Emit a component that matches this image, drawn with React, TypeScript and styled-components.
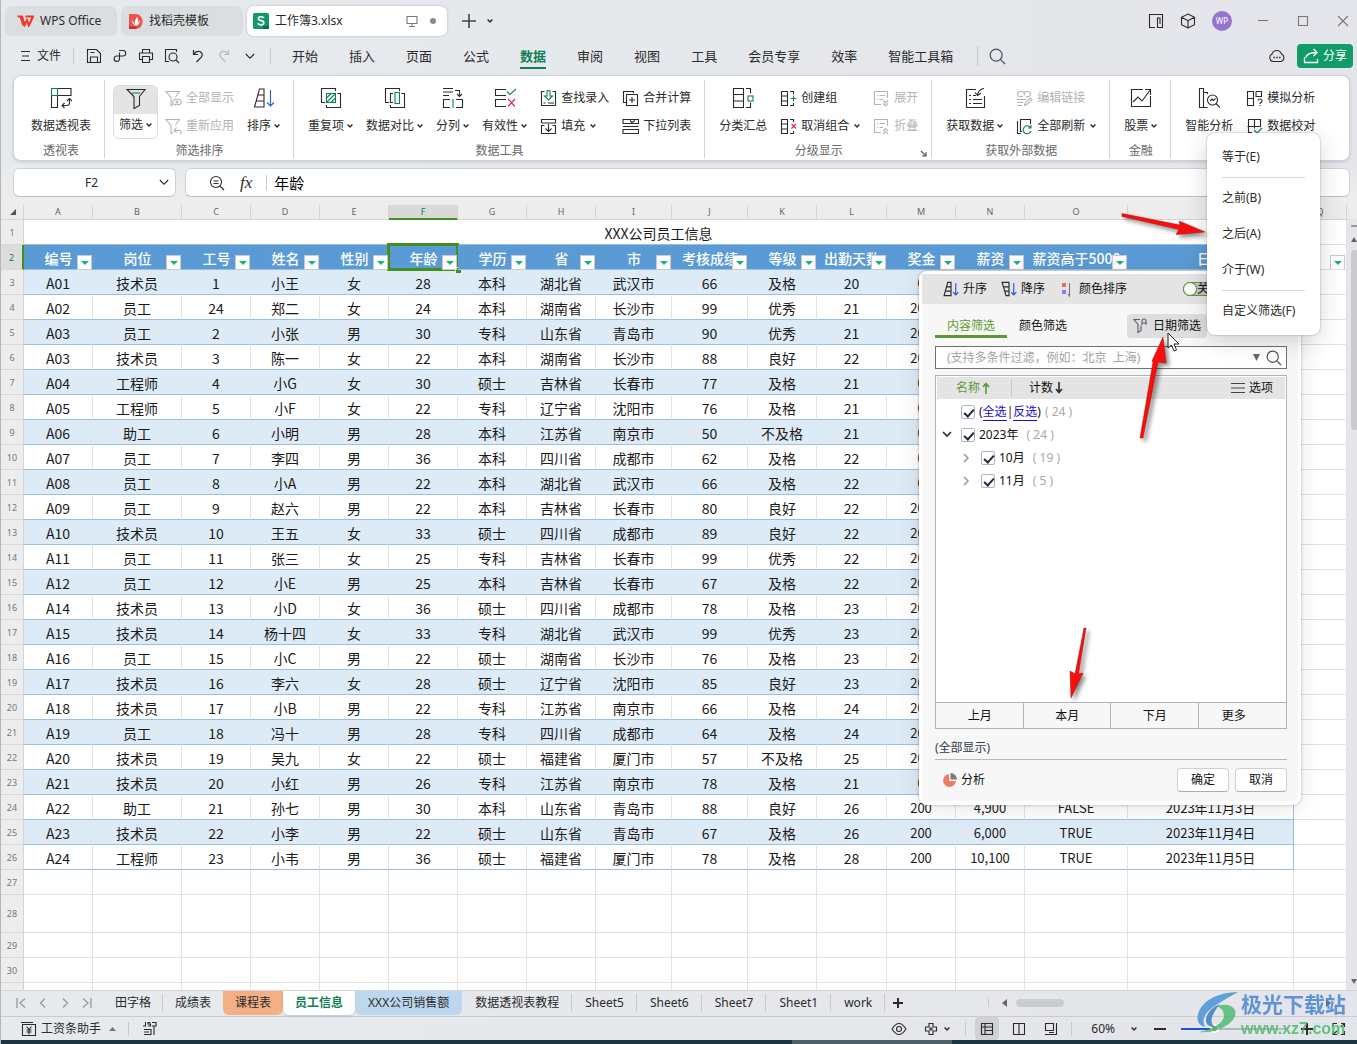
import React from 'react';
import styled, { createGlobalStyle, css } from 'styled-components';

const UI_FONT = '"Noto Sans", "Noto Sans CJK SC", sans-serif';
const CELL_FONT = '"Noto Sans CJK SC", "Noto Sans", sans-serif';
const GREEN = '#0f8056';
const INK = '#2b2b2b';

const Global = createGlobalStyle`
  * { box-sizing: border-box; }
  body { margin: 0; background: #e6e9ed; }
  button, input { font: inherit; color: inherit; margin: 0; padding: 0; border: 0; background: none; }
  button { cursor: pointer; white-space: nowrap; }
  svg { display: block; flex: none; }
`;

/* ---------- data ---------- */

const COLS: [string, number | null][] = [
  ['A', 69], ['B', 89], ['C', 69], ['D', 69], ['E', 69], ['F', 69], ['G', 69], ['H', 69], ['I', 76],
  ['J', 76], ['K', 69], ['L', 70], ['M', 69], ['N', 69], ['O', 103], ['P', 166], ['Q', null],
];
const HEADS = ['编号', '岗位', '工号', '姓名', '性别', '年龄', '学历', '省', '市', '考核成绩', '等级', '出勤天数', '奖金', '薪资', '薪资高于5000', '日期'];
const ROWS = `A01 技术员 1 小王 女 28 本科 湖北省 武汉市 66 及格 20 0
A02 员工 24 郑二 女 24 本科 湖南省 长沙市 99 优秀 21 200
A03 员工 2 小张 男 30 专科 山东省 青岛市 90 优秀 21 200
A03 技术员 3 陈一 女 22 本科 湖南省 长沙市 88 良好 22 200
A04 工程师 4 小G 女 30 硕士 吉林省 长春市 77 及格 21 0
A05 工程师 5 小F 女 22 专科 辽宁省 沈阳市 76 及格 21 0
A06 助工 6 小明 男 28 本科 江苏省 南京市 50 不及格 21 0
A07 员工 7 李四 男 36 本科 四川省 成都市 62 及格 22 0
A08 员工 8 小A 男 22 本科 湖北省 武汉市 66 及格 22 0
A09 员工 9 赵六 男 22 本科 吉林省 长春市 80 良好 22 200
A10 技术员 10 王五 女 33 硕士 四川省 成都市 89 良好 22 200
A11 员工 11 张三 女 25 专科 吉林省 长春市 99 优秀 22 200
A12 员工 12 小E 男 25 本科 吉林省 长春市 67 及格 22 200
A14 技术员 13 小D 女 36 硕士 四川省 成都市 78 及格 23 200
A15 技术员 14 杨十四 女 33 专科 湖北省 武汉市 99 优秀 23 200
A16 员工 15 小C 男 22 硕士 湖南省 长沙市 76 及格 23 200
A17 技术员 16 李六 女 28 硕士 辽宁省 沈阳市 85 良好 23 200
A18 技术员 17 小B 男 22 专科 江苏省 南京市 66 及格 24 200
A19 员工 18 冯十 男 28 专科 四川省 成都市 64 及格 24 200
A20 技术员 19 吴九 女 22 硕士 福建省 厦门市 57 不及格 25 200
A21 技术员 20 小红 男 26 专科 江苏省 南京市 78 及格 21 0
A22 助工 21 孙七 男 30 本科 山东省 青岛市 88 良好 26 200 4,900 FALSE 2023年11月3日
A23 技术员 22 小李 男 22 硕士 山东省 青岛市 67 及格 26 200 6,000 TRUE 2023年11月4日
A24 工程师 23 小韦 男 36 硕士 福建省 厦门市 78 及格 28 200 10,100 TRUE 2023年11月5日`
  .split('\n').map((l) => l.split(' '));

/* ---------- icons ---------- */

type IcoProps = { s?: number; w?: number; h?: number; c?: string; sw?: number; children: React.ReactNode };
const Ico = ({ s = 16, w, h, c = INK, sw = 1.1, children }: IcoProps) => (
  <svg width={w ?? s} height={h ?? s} viewBox={`0 0 ${w ?? s} ${h ?? s}`} fill="none" stroke={c} strokeWidth={sw} aria-hidden="true">
    {children}
  </svg>
);
const Chev = ({ c = INK }: { c?: string }) => (
  <Ico w={6} h={6} c={c} sw={1.4}><path d="M.6 1.500 3 4 5.400 1.500" /></Ico>
);
const BigChev = () => <Ico w={10} h={7} sw={1.1}><path d="M.8 1 5 5.200 9.200 1" /></Ico>;

const PivotIcon = () => (
  <Ico s={22}>
    <path d="M7.500 1.500h13.500v7H7.500M1.500 11v9.500h6V8.500M12 18.500h5q2.500 0 2.500-2.500v-4M14.500 16l-2.500 2.500 2.500 2.500M17 14l2.500-2.500L22 14M1.500 8.500V12" />
    <rect x="1.5" y="1.5" width="6" height="7" stroke={GREEN} />
  </Ico>
);
const FunnelIcon = () => (
  <Ico s={22}>
    <path d="M2 1.500h18l-5.500 7v9L9 20.500v-12L2 1.500z" /><path d="M7 5h8" stroke={GREEN} />
  </Ico>
);
const SmallFunnel = ({ eye }: { eye?: boolean }) => (
  <Ico s={17} c="#b3b3b3">
    <path d="M8 14.500 6 15.500V7.500L1 1.500h13.500L10.500 7" />
    {eye ? <><ellipse cx="12" cy="12" rx="4.300" ry="2.800" /><circle cx="12" cy="12" r="1" /></> : <path d="M9 12.500h4a2 2 0 0 1 2 3.500M11.500 9.500l-2.500 3 2.500 2" />}
  </Ico>
);
const SortIcon = ({ s = 22, flip = false }: { s?: number; flip?: boolean }) => (
  <svg width={s} height={s} viewBox="0 0 22 22" fill="none" stroke={INK} strokeWidth={s < 20 ? 1.6 : 1.1} aria-hidden="true">
    {flip ? <path d="M1.500 2h9.500v18H7zM3 8h8M5 14h6" /> : <path d="M6.500 2H11v18H1.500zM5 8h6M3 14h8" />}
    <path d="M17.500 3v16M14 15.500l3.500 3.500 3.500-3.500" stroke="#2a5be0" />
  </svg>
);
const DupIcon = () => (
  <Ico s={22}>
    <path d="M5 15.500H1.500v-14h14V4M17.500 6.500h3v14h-14V18" />
    <rect x="6.500" y="6.500" width="9" height="9" stroke={GREEN} />
    <path d="M6.500 11 11 6.500M6.500 15.500l9-9M11 15.500l4.500-4.500" stroke={GREEN} />
  </Ico>
);
const CompareIcon = () => (
  <Ico s={22}>
    <path d="M5 15.500H1.500v-14h14V4M17.500 6.500h3v14h-14V18" />
    <path d="M9 6.500H6.500v9H9" /><rect x="11" y="5.500" width="4.500" height="11" stroke={GREEN} />
  </Ico>
);
const SplitIcon = () => (
  <Ico s={22}>
    <path d="M1 1.500h10M1 5h10M1 8.500h6M13 3.500h4.500V9M15 7l2.500 2.500L20 7M8 12.500H1.500v8H8M14 12.500h6.500v8H14" />
    <path d="M11 12v9" stroke={GREEN} />
  </Ico>
);
const ValidIcon = () => (
  <Ico s={22}>
    <path d="M12 2.500H1.500v6H12M12 12.500H1.500v7H12" />
    <path d="M13 4.500l3 3 6-5.500" stroke={GREEN} /><path d="M14 12l7 7.500M21 12l-7 7.500" stroke="#d4264f" />
  </Ico>
);
const LookupIcon = () => (
  <Ico s={17}>
    <path d="M4.500 1.500h-3v14h14v-14h-3M3.500 13h2M8 13h6" />
    <path d="M7 .8h3v5.200h2.500L8.500 10 4.500 6H7z" stroke={GREEN} />
  </Ico>
);
const FillIcon = () => (
  <Ico s={17}><path d="M1.500 5V1.500h14V5H1.500M4.500 7.500h-3v8h14v-8h-3M8.500 6v7M5.500 10.500l3 3 3-3" /></Ico>
);
const MergeIcon = () => (
  <Ico s={17}><path d="M4 12.500H1.500v-11h10V3M4.500 4.500h11v11h-11zM10 7v6M7 10h6" /></Ico>
);
const DropIcon = () => (
  <Ico s={17}><path d="M1 1.500h15.500v4H1zM8 2.500l2 2 3-2M1 8.500h15.500M1 11.500h15.500v4H1z" /></Ico>
);
const SubtotalIcon = () => (
  <Ico s={22}>
    <path d="M1.500 1.500h10v19h-10zM1.500 7.500h10M1.500 14h10M14 1.500h4.500v5M14 20.500h4.500v-5" />
    <rect x="16" y="9" width="5" height="5" stroke={GREEN} />
  </Ico>
);
const GroupIcon = ({ cut }: { cut?: boolean }) => (
  <Ico s={17}>
    <path d="M1.500 1.500h6v14h-6zM1.500 6h6M1.500 11h6M10 1.500h3.500V4M10 15.500h3.500V13" />
    {cut ? <path d="M11.500 6l4.500 4.500M16 6l-4.500 4.500" stroke="#d4264f" /> : <path d="M13.500 5.500v6M10.500 8.500h6" stroke={GREEN} />}
  </Ico>
);
const ExpandIcon = ({ up }: { up?: boolean }) => (
  <Ico s={17} c="#b3b3b3">
    <path d="M8 14.500H1.500v-13h13V8M4 5.500h1M6.500 5.500H12M4 9.500h1M6.500 9.500H10" />
    <path d={up ? 'M10 13l2.500-2.500L15 13M10 16l2.500-2.500L15 16' : 'M10 10.500l2.500 2.500 2.500-2.500M10 13.500l2.500 2.500 2.500-2.500'} />
  </Ico>
);
const GetDataIcon = () => (
  <Ico s={22}>
    <path d="M12 2.500H2.500v18h18V9M5 8.500h2M9 8.500h3M5 12.500h2M9 12.500h9M5 16.500h2M9 16.500h9M20 1.500q-6 1-6.500 7M11 5.500l2.500 3L17 6" />
  </Ico>
);
const LinkEditIcon = () => (
  <Ico s={17} c="#b3b3b3">
    <path d="M7 6.500H4a2.500 2.500 0 0 1 0-5h2.500a2.500 2.500 0 0 1 1.500 4M8 4a2.500 2.500 0 0 1 2.500-2.500H12a2.500 2.500 0 0 1 0 5h-2M1 9.500h9M1 12.500h6M1 15.500h5M8.500 15.500l1-3 5-4.500 1.500 2-5 4.500z" />
  </Ico>
);
const RefreshAllIcon = () => (
  <Ico s={17}>
    <path d="M1.500 3v12.500H5M6 13.500H4.500v-12h10V6" />
    <path d="M14.500 9.500a4 4 0 1 0 .5 3.500M15 7v3h-3" stroke={GREEN} />
  </Ico>
);
const StockIcon = () => (
  <Ico s={22}><path d="M13 2.500H1.500v17h19V9M3 15l5-5 4 4L20.500 2.500M15 2.500h5.500V8" /></Ico>
);
const SmartIcon = () => (
  <Ico s={22}>
    <path d="M5.500 20.500h-4v-19h4zM5.500 5.500h4V7M5.500 20.500h4" /><circle cx="14.500" cy="13" r="5" /><path d="M18 16.500l4 4M12 14l2-2 1.500 1.500 2-2" />
  </Ico>
);
const SimIcon = () => (
  <Ico s={17}>
    <path d="M1.500 1.500h6v7h-6zM10 1.500h5.500v5H10v-5M1.500 8.500v7h6v-7M12 10.500q.5-1.500 2-1.500t2 1.500-2 2.500v1M14 15v1" />
  </Ico>
);
const ProofIcon = () => (
  <Ico s={17}><path d="M6 14.500H2.500v-13h12v7h-13M8.500 1.500v9" /><path d="M8 12l3 3 5-5" stroke={GREEN} /></Ico>
);
const SearchIcon = ({ s = 17 }: { s?: number }) => (
  <Ico s={s} c="#4a4f5a" sw={1.2}><circle cx={s * 0.42} cy={s * 0.42} r={s * 0.35} /><path d={`M${s * 0.68} ${s * 0.68} ${s - 1} ${s - 1}`} /></Ico>
);

/* ---------- frame ---------- */

const Window = styled.div`
  position: relative; display: flex; flex-direction: column; height: 100vh; overflow: hidden;
  border-left: 1px solid #b4b6b9; background: linear-gradient(90deg, #e6eaed, #e4e5ea);
  font: 12px/20px ${UI_FONT}; color: ${INK};
`;
const Row = styled.div<{ $gap?: number }>`display: flex; align-items: center; gap: ${(p) => p.$gap ?? 0}px;`;
const Spacer = styled.div`flex: 1;`;
const VLine = styled.span<{ $h: number; $l?: number; $r?: number }>`
  width: 1px; height: ${(p) => p.$h}px; margin: 0 ${(p) => p.$r ?? 0}px 0 ${(p) => p.$l ?? 0}px; background: #c6c8cb; flex: none;
`;
const IconBtn = styled.button<{ $w?: number; $gap?: number }>`
  display: flex; align-items: center; justify-content: center; gap: ${(p) => p.$gap ?? 0}px; width: ${(p) => p.$w ?? 26}px; height: 24px; flex: none;
`;

const TitleBar = styled.header`display: flex; align-items: center; height: 40px; padding: 2px 3px 0 4px;`;
const DocTab = styled.button<{ $w: number; $pad?: number; $active?: boolean }>`
  display: flex; align-items: center; gap: 6px; width: ${(p) => p.$w}px; height: 30px; padding: 0 6px 0 ${(p) => p.$pad ?? 6}px;
  margin-right: 4px; border-radius: 7px; background: #dbdee0; text-align: left;
  ${(p) => p.$active && css`background: #fff; margin-right: 8px; box-shadow: 0 0 3px rgba(0, 0, 0, 0.2);`}
`;
const Dot = styled.span`width: 6px; height: 6px; border-radius: 3px; background: #8b8b8b; margin: 0 5px 0 6px;`;
const Avatar = styled.button`
  width: 20px; height: 20px; margin: 0 20px 0 8px; border-radius: 10px; background: #9673cf; color: #fff; font-size: 8px; line-height: 20px;
`;

const MenuBar = styled.nav`display: flex; align-items: center; height: 32px; padding: 0 4px 0 20px;`;
const MenuTabs = styled.div`display: flex; gap: 31px; margin-right: 24px;`;
const MenuTab = styled.button<{ $on?: boolean }>`
  height: 26px; font-size: 13px; line-height: 26px;
  ${(p) => p.$on && css`color: ${GREEN}; font-weight: 700; box-shadow: inset 0 -2px ${GREEN};`}
`;
const ShareBtn = styled.button`
  display: flex; align-items: center; gap: 4px; height: 24px; padding: 0 6px; border-radius: 4px; background: #109b69; color: #fff;
`;

/* ---------- ribbon ---------- */

const Ribbon = styled.section`
  display: flex; margin: 3px 7px 0 12px; padding: 4px 0 2px; border-radius: 8px; background: #fff;
  border: 1px solid #d0d3d6; box-shadow: 0 1px 3px rgba(0, 0, 0, 0.15); flex: none; height: 86px;
`;
const Group = styled.div<{ $first?: boolean; $last?: boolean }>`
  position: relative; display: flex; flex-direction: column; flex: none;
  padding: 4px 13px 0 ${(p) => (p.$first ? 17 : 14)}px; border-right: ${(p) => (p.$last ? 0 : 1)}px solid #d2d3d5;
`;
const Big = styled.button<{ $boxed?: boolean }>`
  display: grid; grid-template-rows: 28px 28px; justify-items: center; align-items: center;
  ${(p) => p.$boxed && css`
    height: 52px; grid-template-rows: 26px 26px; margin: 0 -5px; padding: 0 5px; border-radius: 5px; box-shadow: 0 0 0 1px #dcdcdc;
    background: linear-gradient(#e4e4e4 28px, #fff 28px);
  `}
`;
const Stack = styled.div`display: grid; grid-template-rows: 28px 28px; align-items: center; justify-items: start;`;
const Small = styled.button<{ $off?: boolean }>`
  display: flex; align-items: center; gap: 4px; height: 24px; ${(p) => p.$off && css`color: #b3b3b3;`}
`;
const Label = styled.span<{ $gap?: number }>`display: flex; align-items: center; gap: ${(p) => p.$gap ?? 3}px;`;
const GroupName = styled.div`margin-top: 3px; height: 16px; line-height: 16px; text-align: center; color: #6a6a6a;`;
const Launcher = styled.button`position: absolute; right: 3px; bottom: 1px; width: 8px; height: 8px;`;

const BigItem = ({ icon, text, more, boxed }: { icon: React.ReactNode; text: string; more?: boolean; boxed?: boolean }) => (
  <Big $boxed={boxed}>{icon}<Label>{text}{more && <Chev />}</Label></Big>
);
const SmallItem = ({ icon, text, more, off }: { icon: React.ReactNode; text: string; more?: boolean; off?: boolean }) => (
  <Small $off={off}>{icon}<Label $gap={5}>{text}{more && <Chev />}</Label></Small>
);

/* ---------- formula bar ---------- */

const FormulaBar = styled.div`
  display: flex; gap: 9px; padding: 7px 7px 8px 12px; background: linear-gradient(transparent, #ededed 38px); flex: none;
`;
const Box = styled.div<{ $w?: number }>`
  display: flex; align-items: center; height: 29px; border: 1px solid #cfd1d3; border-bottom-color: #bdbfc1; border-radius: 6px; background: #fff;
  ${(p) => (p.$w ? css`width: ${p.$w}px; padding-right: 6px;` : css`flex: 1; padding-left: 22px;`)}
`;
const NameInput = styled.input`flex: 1; min-width: 0; padding-left: 10px; text-align: center; outline: 0;`;
const FxInput = styled.input`flex: 1; min-width: 0; height: 25px; margin-left: 7px; font-size: 15px; color: #000; outline: 0;`;
const Fx = styled.em`font: italic 17px/20px "Liberation Serif", serif; margin: 0 14px;`;

/* ---------- sheet ---------- */

const SheetArea = styled.main`display: flex; flex: 1; min-height: 0; background: #ededed;`;
const SheetView = styled.div`flex: 1; min-width: 0; overflow: hidden;`;
const Grid = styled.table`
  width: 100%; table-layout: fixed; border-collapse: separate; border-spacing: 0; font: 14px/22px ${CELL_FONT}; color: #1a1a1a;
`;
const ColHead = styled.th<{ $on?: boolean }>`
  height: 15px; padding: 0; font: 9px/12px ${UI_FONT}; color: #666; border-right: 1px solid #d4d4d4; border-bottom: 1px solid #d4d4d4;
  ${(p) => p.$on && css`background: #d9d9d9; color: ${GREEN}; box-shadow: inset 0 -1px #43901f; border-bottom-color: #43901f;`}
`;
const RowHead = styled.th<{ $on?: boolean }>`
  padding: 1px 0 0; font: 9px/12px ${UI_FONT}; color: #777; background: #ededed; border-right: 1px solid #d4d4d4; border-bottom: 1px solid #d9d9d9;
  ${(p) => p.$on && css`background: #dcdcdc; color: ${GREEN}; border-right: 2px solid #43901f;`}
`;
const Tr = styled.tr<{ $h?: number }>`height: ${(p) => p.$h ?? 25}px;`;
const Td = styled.td<{ $kind?: 'band' | 'data' | 'title'; $small?: boolean; $edge?: boolean }>`
  padding: 2px 0 0; text-align: center; white-space: nowrap; overflow: hidden; background: #fff; line-height: 22px;
  border-right: 1px solid #e2e2e2; border-bottom: 1px solid #e2e2e2;
  ${(p) => p.$small && css`font-size: 13px;`}
  ${(p) => p.$kind && css`border-bottom-color: #9bbfe3;`}
  ${(p) => p.$kind === 'band' && css`background: #ddebf7; border-right-color: #ddebf7;`}
  ${(p) => p.$edge && css`border-right-color: #9bbfe3;`}
`;
const FieldHead = styled.th`
  position: relative; padding: 2px 0 0; font-weight: 500; line-height: 22px; color: #fff; white-space: nowrap; background: #5b9bd5; border-bottom: 1px solid #9bbfe3;
`;
const FilterBtn = styled.button`
  position: absolute; right: 1px; bottom: -1px; z-index: 1; display: flex; align-items: center; justify-content: center;
  width: 15px; height: 15px; background: #fff; border: 1px solid #c5cad3;
`;
const Blank = styled(Td)`position: relative;`;
const Selection = styled.span`
  position: absolute; inset: -2px -1px -2px -2px; border: 3px solid #43901f; pointer-events: none;
  &::after { content: ''; position: absolute; right: -5px; bottom: -5px; width: 5px; height: 5px; background: #43901f; border: 1px solid #fff; border-width: 1px 0 0 1px; }
`;
const Corner = styled.span`display: flex; justify-content: flex-end; padding-right: 7px;`;
const VScroll = styled.div`
  display: flex; flex-direction: column; align-items: flex-end; width: 10px; margin-top: 14px; padding: 6px 0 6px; background: #e4e6ea;
`;
const VGap = styled.div`height: 10px;`;
const VThumb = styled.div`width: 6px; height: 180px; margin: 8px 0 auto; border-radius: 4px 0 0 4px; background: #c9cbcf;`;

const Tri = ({ d, w = 8, h = 5, c = '#666' }: { d: string; w?: number; h?: number; c?: string }) => (
  <svg width={w} height={h} viewBox={`0 0 ${w} ${h}`} fill={c} aria-hidden="true"><path d={d} /></svg>
);
const Filter = ({ name }: { name: string }) => (
  <FilterBtn aria-label={`筛选 ${name}`}><Tri d="M0 0h8L4 4z" w={8} h={4} c="#1fae7b" /></FilterBtn>
);

/* ---------- bottom bars ---------- */

const SheetTabs = styled.nav`
  display: flex; align-items: flex-start; height: 27px; border-top: 1px solid #d3d4d6; border-bottom: 1px solid #c9cbcd; flex: none; padding-left: 10px;
`;
const SheetTab = styled.button<{ $bg?: string; $on?: boolean; $line?: boolean; $wide?: boolean }>`
  height: 24px; padding: 0 ${(p) => (p.$wide ? 13 : 12)}px; line-height: 24px; border-radius: 0 0 6px 6px; background: ${(p) => p.$bg ?? 'transparent'};
  ${(p) => p.$on && css`background: #fff; color: ${GREEN}; font-weight: 700; box-shadow: 0 1px 2px rgba(0, 0, 0, 0.15);`}
  ${(p) => p.$line && css`background: linear-gradient(#c6c8cb, #c6c8cb) right 3px / 1px 18px no-repeat;`}
`;
const TabNav = styled.div`display: flex; width: 92px; height: 24px; gap: 2px;`;
const HThumb = styled.div`width: 48px; height: 8px; border-radius: 4px; background: #cbccd0; margin: 0 262px 0 9px;`;
const HScroll = styled.div`display: flex; align-items: center; height: 24px; margin-left: auto; padding-right: 26px;`;
const StatusBar = styled.footer`display: flex; align-items: center; height: 23px; padding-left: 20px; flex: none;`;
const ViewBtn = styled.button<{ $on?: boolean }>`
  display: flex; align-items: center; justify-content: center; width: 24px; height: 23px; margin-right: 8px; border-radius: 4px;
  ${(p) => p.$on && css`background: #d0d1d4;`}
`;
const Zoom = styled.input`
  appearance: none; width: 105px; height: 12px; margin: 0 7px 0 13px; background: linear-gradient(90deg, #2450dc 30%, #b5b7bb 30%) center / 100% 2px no-repeat;
  &::-webkit-slider-thumb { appearance: none; width: 9px; height: 9px; border-radius: 5px; background: #8f8f8f; border: 2px solid #fff; }
`;
const Taskbar = styled.div`display: flex; justify-content: center; height: 4px; background: #1d3540; flex: none; padding-left: 386px;`;
const TaskItem = styled.span`width: 160px; background: #4f6068;`;

/* ---------- filter panel ---------- */

const Panel = styled.section`
  position: absolute; top: 271px; right: 56px; z-index: 5; width: 382px; border: 3px solid #fff; border-bottom-width: 4px; border-radius: 8px;
  background: #f7f7f7; box-shadow: 0 0 3px rgba(0, 0, 0, 0.3), 0 4px 24px rgba(0, 0, 0, 0.1); color: #111;
`;
const PanelTop = styled.div`display: flex; align-items: center; height: 30px; padding-left: 21px; background: #e4e4e4;`;
const TopBtn = styled.button`display: flex; align-items: center; gap: 4px; margin-right: 14px; height: 24px;`;
const Switch = styled.label`
  display: flex; align-items: center; gap: 1px; width: 36px; height: 14px; margin-left: 42px; border: 1px solid #5b9a32; border-radius: 7px; background: #c2c2c2; line-height: 12px;
  input { appearance: none; width: 12px; height: 12px; border-radius: 6px; background: #fff; box-shadow: 0 0 0 1px #5b9a32; }
`;
const PanelBody = styled.div`padding: 9px 11px 9px 13px;`;
const PTab = styled.button<{ $on?: boolean }>`
  height: 25px; padding: 0 12px; line-height: 24px; ${(p) => p.$on && css`color: #5b9a32; box-shadow: inset 0 -3px #5b9a32;`}
`;
const DateBtn = styled.button`
  display: flex; align-items: center; gap: 6px; height: 24px; padding: 0 6px; margin-left: 48px; border-radius: 4px; background: #dedede;
`;
const SearchBox = styled.div`
  display: flex; align-items: center; gap: 6px; height: 23px; margin-top: 8px; padding: 0 4px 0 11px; border: 1px solid #707070; background: #fff;
  input { flex: 1; min-width: 0; outline: 0; }
  input::placeholder { color: #a3a3a3; }
`;
const List = styled.div`margin-top: 6px; border: 1px solid #aab4c3; background: #fff;`;
const ListHead = styled.div`
  display: flex; align-items: center; height: 22px; margin: 1px 1px 0; padding: 0 12px 0 19px; background: #e4e4e4;
`;
const HeadBtn = styled.button<{ $on?: boolean }>`display: flex; align-items: center; gap: 2px; height: 20px; ${(p) => p.$on && css`color: #5b9a32;`}`;
const Tree = styled.div`height: 303px; padding-top: 1px;`;
const TreeRow = styled.div<{ $in: number }>`
  display: flex; align-items: center; gap: 4px; height: 23px; padding-left: ${(p) => p.$in}px;
  label { display: flex; align-items: center; }
  a { color: #1a10c8; text-decoration: none; box-shadow: 0 1px #1a10c8; }
`;
const Twist = styled.button`display: flex; align-items: center; justify-content: center; width: 11px; height: 16px; margin-right: 5px;`;
const Tick = styled.input`
  appearance: none; position: relative; width: 14px; height: 14px; background: #fff; border: 1px solid #aab4c3; border-radius: 2px; flex: none;
  &:checked::after { content: ''; position: absolute; left: 4px; top: 1px; width: 4px; height: 8px; border: solid #23283a; border-width: 0 2px 2px 0; transform: rotate(42deg); }
`;
const Count = styled.span`color: #a8a8a8; margin-left: 1px; white-space: pre;`;
const Months = styled.div`display: grid; grid-template-columns: repeat(4, 1fr); border-top: 1px solid #aab4c3; background: #f7f7f7;`;
const MonthBtn = styled.button<{ $more?: boolean }>`
  height: 25px; line-height: 25px; padding-right: ${(p) => (p.$more ? 17 : 0)}px; & + & { box-shadow: -1px 0 #aab4c3; }
`;
const Shown = styled.div`margin-top: 9px; height: 22px; line-height: 20px; color: #333b4a; border-bottom: 1px solid #b0b9c7;`;
const PanelFoot = styled.div`display: flex; align-items: center; gap: 6px; padding: 8px 0 0 7px;`;
const Btn = styled.button`width: 52px; height: 24px; border: 1px solid #cfcfcf; border-bottom-color: #ababab; border-radius: 4px; background: #fff;`;

const Menu = styled.div`
  position: absolute; top: 133px; right: 37px; z-index: 6; width: 113px; padding: 6px 15px; border-radius: 8px; background: #fff;
  box-shadow: 0 0 2px rgba(0, 0, 0, 0.35), 0 6px 24px rgba(0, 0, 0, 0.16);
`;
const MenuItem = styled.button`display: block; width: 100%; height: 36px; line-height: 36px; text-align: left;`;
const MenuSep = styled.hr`height: 1px; margin: 2px 0; border: 0; background: #d8d8d8;`;

/* ---------- annotations over the window ---------- */

const Mark = styled.svg<{ $x: number; $y: number }>`
  position: absolute; right: ${(p) => p.$x}px; top: ${(p) => p.$y}px; z-index: 8; pointer-events: none; overflow: visible;
`;
const Arrow = styled(Mark)`filter: drop-shadow(3px 3px 2px rgba(0, 0, 0, 0.45)); fill: #fb0d0d; stroke: #a01010; stroke-width: 0.5;`;
const Watermark = styled.div`
  position: absolute; right: 11px; bottom: 5px; z-index: 9; display: flex; align-items: center; gap: 1px; opacity: 0.8; pointer-events: none;
`;
const WmText = styled.div`
  font: 700 21px/32px ${CELL_FONT}; color: #3f7fd0;
  span { display: block; font: 700 16px/20px "Liberation Sans", sans-serif; color: #45b865; }
`;

export default function App() {
  return (
    <Window>
      <Global />
      <TitleBar>
        <DocTab $w={112} $pad={12}>
          <svg width="17" height="12" viewBox="0 0 17 12" fill="none" stroke="#ee3a26" strokeWidth="2.200"><path d="M.5 1.500h4.500L7.500 10l3-6M3.500 1.500 6.500 10.500M8.500 1.500h7.500L11.800 10.500 9.500 4" /></svg>
          WPS Office
        </DocTab>
        <DocTab $w={122} $pad={7}>
          <svg width="15" height="17" viewBox="0 0 15 17"><path d="M1 1h7q6.500 1 6.500 7.500T8 16H1z" fill="#ef5350" /><path d="M1 13.500h8l-1 2.500H1z" fill="#c62f2f" /><path d="M8 13Q5 10 9 4q3 4-1 9M4 7q0 4 4 6M12 7q0 4-4 6" fill="#fff" /></svg>
          找稻壳模板
        </DocTab>
        <DocTab $w={200} $active>
          <svg width="16" height="16" viewBox="0 0 16 16"><rect width="16" height="16" rx="1.500" fill="#12996a" /><path d="M10 13h6v3h-6z" fill="#0b6e4a" /><path d="M10.800 5.200Q10.500 3.700 8 3.700T5.300 5.600Q5.300 7.200 8 7.600T10.800 9.800Q10.600 11.900 8 11.900T5.100 10.100" fill="none" stroke="#fff" strokeWidth="1.600" /></svg>
          工作簿3.xlsx
          <Spacer as="span" />
          <Ico w={12} h={12} c="#7a7a7a"><path d="M1 1.500h10v7H1zM6 8.500v3M3 11.500h6" /></Ico>
          <Dot />
        </DocTab>
        <IconBtn $w={28} aria-label="新建"><Ico s={14} sw={1.600} c="#444"><path d="M7 0v14M0 7h14" /></Ico></IconBtn>
        <IconBtn $w={14} aria-label="标签列表"><Chev /></IconBtn>
        <Spacer />
        <IconBtn $w={32} aria-label="侧边栏"><Ico s={16}><path d="M7 14.500H1.500v-13h13v13H9.500V5H12v6" /></Ico></IconBtn>
        <IconBtn $w={32} aria-label="应用"><Ico s={16}><path d="M8 1l6.500 3.300v7.400L8 15l-6.500-3.300V4.300zM1.500 4.300 8 7.700l6.500-3.400M8 7.700V15" /></Ico></IconBtn>
        <Avatar>WP</Avatar>
        <IconBtn $w={22} aria-label="最小化"><Ico s={12} c="#777"><path d="M1 5.500h10" /></Ico></IconBtn>
        <IconBtn $w={58} aria-label="还原"><Ico s={12} c="#777"><path d="M1.500 1.500h9v9h-9z" /></Ico></IconBtn>
        <IconBtn $w={22} aria-label="关闭"><Ico s={12} c="#777"><path d="M1 1l10 10M11 1 1 11" /></Ico></IconBtn>
      </TitleBar>

      <MenuBar>
        <Small><Ico w={12} h={12}><path d="M0 1.500h9M1 6h7M0 10.500h9" /></Ico><Label>文件</Label></Small>
        <VLine $h={16} $l={12} $r={7} />
        <IconBtn aria-label="保存"><Ico s={16}><path d="M1.500 14.500v-13h9l4 4v9zM4.500 14v-5h7v5M4.500 4.500h4" /></Ico></IconBtn>
        <IconBtn aria-label="输出"><Ico s={14}><path d="M6 1.500h4a2.700 2.700 0 0 1 0 5.500H4a2.700 2.700 0 1 0 2.500 3V3.500" /></Ico></IconBtn>
        <IconBtn aria-label="打印"><Ico s={16}><path d="M4.500 5V1.500h7V5M4 11.500H1.500V5h13v6.500H12M4.500 8.500h7v6h-7z" /></Ico></IconBtn>
        <IconBtn aria-label="打印预览"><Ico s={16}><path d="M5 13.500H1.500v-12h11V4" /><circle cx="9" cy="9" r="4" /><path d="M12 12l3 3" /></Ico></IconBtn>
        <IconBtn aria-label="撤销"><Ico s={14} sw={1.200}><path d="M2.500 1v4.500H7M2.500 5.500Q5 1.500 9 2.500q3.500 2 1.500 5.500L5.500 13" /></Ico></IconBtn>
        <IconBtn aria-label="恢复"><Ico s={14} c="#b9bbbd" sw={1.200}><path d="M11.500 1v4.500H7M11.500 5.500Q9 1.500 5 2.500 1.500 4.500 3.500 8L8.500 13" /></Ico></IconBtn>
        <IconBtn aria-label="更多"><BigChev /></IconBtn>
        <VLine $h={16} $l={7} $r={21} />
        <MenuTabs>
          {['开始', '插入', '页面', '公式', '数据', '审阅', '视图', '工具', '会员专享', '效率', '智能工具箱'].map((t) => (
            <MenuTab key={t} $on={t === '数据'}>{t}</MenuTab>
          ))}
        </MenuTabs>
        <VLine $h={20} $r={9} />
        <IconBtn $w={20} aria-label="搜索"><SearchIcon /></IconBtn>
        <Spacer />
        <Row $gap={10}>
          <IconBtn $w={20} aria-label="云"><Ico w={18} h={16}><path d="M5 13.500a4 4 0 0 1-1-7.500 5 5 0 0 1 9.500 0A4 4 0 0 1 13 13.500z" /><path d="M5.500 9.500h1.500M8.300 9.500h1.500M11 9.500h1.500" strokeWidth="1.500" /></Ico></IconBtn>
          <ShareBtn><Ico s={16} c="#fff" sw={1.300}><path d="M1.500 9v5.500h13V11M3 9.500q1-5 11-5M10.500 1 14 4.500 10.500 8" /></Ico>分享</ShareBtn>
        </Row>
      </MenuBar>

      <Ribbon>
        <Group $first>
          <Row><BigItem icon={<PivotIcon />} text="数据透视表" /></Row>
          <GroupName>透视表</GroupName>
        </Group>
        <Group>
          <Row $gap={13}>
            <BigItem boxed icon={<FunnelIcon />} text="筛选" more />
            <Stack><SmallItem off icon={<SmallFunnel eye />} text="全部显示" /><SmallItem off icon={<SmallFunnel />} text="重新应用" /></Stack>
            <BigItem icon={<SortIcon />} text="排序" more />
          </Row>
          <GroupName>筛选排序</GroupName>
        </Group>
        <Group>
          <Row $gap={13}>
            <BigItem icon={<DupIcon />} text="重复项" more />
            <BigItem icon={<CompareIcon />} text="数据对比" more />
            <BigItem icon={<SplitIcon />} text="分列" more />
            <BigItem icon={<ValidIcon />} text="有效性" more />
            <Stack><SmallItem icon={<LookupIcon />} text="查找录入" /><SmallItem icon={<FillIcon />} text="填充" more /></Stack>
            <Stack><SmallItem icon={<MergeIcon />} text="合并计算" /><SmallItem icon={<DropIcon />} text="下拉列表" /></Stack>
          </Row>
          <GroupName>数据工具</GroupName>
        </Group>
        <Group>
          <Row $gap={13}>
            <BigItem icon={<SubtotalIcon />} text="分类汇总" />
            <Stack><SmallItem icon={<GroupIcon />} text="创建组" /><SmallItem icon={<GroupIcon cut />} text="取消组合" more /></Stack>
            <Stack><SmallItem off icon={<ExpandIcon />} text="展开" /><SmallItem off icon={<ExpandIcon up />} text="折叠" /></Stack>
          </Row>
          <GroupName>分级显示</GroupName>
          <Launcher aria-label="分级显示设置"><Ico s={7} c="#555"><path d="M1 1l5 5M6 2v4H2" /></Ico></Launcher>
        </Group>
        <Group>
          <Row $gap={13}>
            <BigItem icon={<GetDataIcon />} text="获取数据" more />
            <Stack><SmallItem off icon={<LinkEditIcon />} text="编辑链接" /><SmallItem icon={<RefreshAllIcon />} text="全部刷新" more /></Stack>
          </Row>
          <GroupName>获取外部数据</GroupName>
        </Group>
        <Group>
          <Row><BigItem icon={<StockIcon />} text="股票" more /></Row>
          <GroupName>金融</GroupName>
        </Group>
        <Group $last>
          <Row $gap={13}>
            <BigItem icon={<SmartIcon />} text="智能分析" />
            <Stack><SmallItem icon={<SimIcon />} text="模拟分析" /><SmallItem icon={<ProofIcon />} text="数据校对" /></Stack>
          </Row>
        </Group>
      </Ribbon>

      <FormulaBar>
        <Box $w={163}><NameInput aria-label="名称框" defaultValue="F2" /><IconBtn $w={10} aria-label="名称列表"><BigChev /></IconBtn></Box>
        <Box>
          <IconBtn $w={18} aria-label="浏览公式"><Ico s={16}><circle cx="7" cy="7" r="5.500" /><path d="M4.500 6h5M4.500 8.500h5M11 11l4 4" /></Ico></IconBtn>
          <Fx>fx</Fx>
          <VLine $h={16} />
          <FxInput aria-label="编辑栏" defaultValue="年龄" />
        </Box>
      </FormulaBar>

      <SheetArea>
        <SheetView>
          <Grid>
            <colgroup>
              <col width={23} />
              {COLS.map(([n, w]) => <col key={n} width={w ?? undefined} />)}
            </colgroup>
            <thead>
              <tr>
                <ColHead aria-label="全选"><Corner><Tri d="M6 0v6H0z" w={6} h={6} c="#555" /></Corner></ColHead>
                {COLS.map(([n]) => <ColHead key={n} $on={n === 'F'}>{n}</ColHead>)}
              </tr>
            </thead>
            <tbody>
              <Tr>
                <RowHead>1</RowHead>
                <Td $kind="title" colSpan={16}>XXX公司员工信息</Td>
                <Td />
              </Tr>
              <Tr>
                <RowHead $on>2</RowHead>
                {HEADS.map((h, i) => (
                  <FieldHead key={h}>{h}<Filter name={h} />{i === 5 && <Selection />}</FieldHead>
                ))}
                <Blank><Filter name="Q" /></Blank>
              </Tr>
              {ROWS.map((r, i) => (
                <Tr key={i}>
                  <RowHead>{i + 3}</RowHead>
                  {HEADS.map((h, c) => (
                    <Td key={h} $kind={i % 2 ? 'data' : 'band'} $small={c > 11} $edge={c === 15}>{r[c]}</Td>
                  ))}
                  <Td />
                </Tr>
              ))}
              {[25, 38, 25, 25, 25].map((h, i) => (
                <Tr key={i} $h={h}>
                  <RowHead>{i < 4 ? i + 27 : ''}</RowHead>
                  {COLS.map(([n]) => <Td key={n} />)}
                </Tr>
              ))}
            </tbody>
          </Grid>
        </SheetView>
        <VScroll>
          <Tri d="M0 0h6v2H0z" w={6} h={2} c="#9b9b9b" />
          <VGap />
          <Tri d="M3 0 6 5H0z" w={6} />
          <VThumb />
          <Tri d="M0 0h6L3 5z" w={6} />
        </VScroll>
      </SheetArea>

      <SheetTabs>
        <TabNav>
          {['M2 1v10M10 1.500 5 6l5 4.500', 'M8 1.500 3.500 6 8 10.500', 'M4 1.500 8.500 6 4 10.500', 'M10 1v10M2 1.500 7 6l-5 4.500'].map((d, i) => (
            <IconBtn key={d} $w={20} aria-label={`工作表导航 ${i + 1}`}><Ico s={12} c="#999" sw={1.300}><path d={d} /></Ico></IconBtn>
          ))}
        </TabNav>
        <SheetTab $line>田字格</SheetTab>
        <SheetTab>成绩表</SheetTab>
        <SheetTab $bg="#f4b084">课程表</SheetTab>
        <SheetTab $on>员工信息</SheetTab>
        <SheetTab $bg="#bdd7ee" $wide>XXX公司销售额</SheetTab>
        <SheetTab $line $wide>数据透视表教程</SheetTab>
        {['Sheet5', 'Sheet6', 'Sheet7', 'Sheet1', 'work'].map((t) => <SheetTab key={t} $line $wide>{t}</SheetTab>)}
        <IconBtn aria-label="新建工作表"><Ico s={10} sw={2}><path d="M5 0v10M0 5h10" /></Ico></IconBtn>
        <HScroll>
          <VLine $h={8} $r={13} />
          <Tri d="M5 0v8L0 4z" w={5} h={8} />
          <HThumb />
          <Tri d="M0 0v8l5-4z" w={5} h={8} />
        </HScroll>
      </SheetTabs>

      <StatusBar>
        <Small><Ico s={16}><path d="M0 1.500h12M1.500 3.500h13v11h-13zM5.500 5.500 8 8.500l2.500-3M8 8.500v5M5.500 9h5M5.500 11h5" /></Ico><Label>工资条助手</Label></Small>
        <IconBtn $w={22} aria-label="展开助手"><Tri d="M0 4h7L3.500 0z" w={7} h={4} c="#6b7690" /></IconBtn>
        <VLine $h={14} $l={5} $r={11} />
        <IconBtn $w={18} aria-label="JS 宏"><Ico s={15}><path d="M3.500 1v4H1M8.500 1.500H6V3h2.500v2H6M10 1.500h4V5h-4M12 5v9M2 8.500h7v5H2M2 11h5" /></Ico></IconBtn>
        <Spacer />
        <IconBtn aria-label="阅读模式"><Ico w={16} h={14}><path d="M1 7q7-11 14 0-7 11-14 0z" /><circle cx="8" cy="7" r="2.500" /></Ico></IconBtn>
        <IconBtn $w={50} $gap={6} aria-label="十字定位"><Ico s={14}><path d="M5 5V1.500h4V5h3.500v4H9v3.500H5V9H1.500V5z" /><path d="M6 6h2v2H6z" /></Ico><Chev /></IconBtn>
        <VLine $h={14} $l={3} $r={9} />
        <ViewBtn $on aria-label="普通视图"><Ico s={14}><path d="M1.500 1.500h11v11h-11zM1.500 5h11M5 1.500v11M5 8.500h7.500" /></Ico></ViewBtn>
        <ViewBtn aria-label="分页预览"><Ico s={14}><path d="M1.500 1.500h11v11h-11zM7 1.500v11" /></Ico></ViewBtn>
        <ViewBtn aria-label="页面布局"><Ico s={14}><path d="M1.500 1.500h8v7h-8zM1 12.500h11.500V1M5 10.500h5" /></Ico></ViewBtn>
        <VLine $h={14} $r={19} />
        <span>60%</span>
        <IconBtn $w={37} aria-label="缩放比例"><Chev /></IconBtn>
        <IconBtn $w={16} aria-label="缩小"><Ico s={12} sw={2}><path d="M0 6h12" /></Ico></IconBtn>
        <Zoom type="range" aria-label="缩放" defaultValue={30} />
        <IconBtn $w={28} aria-label="放大"><Ico s={12} sw={2}><path d="M6 0v12M0 6h12" /></Ico></IconBtn>
        <IconBtn $w={36} aria-label="全屏"><Ico s={14}><path d="M1 5V1.500h4M9 1.500h3.500V5M12.500 9v3.500H9M5 12.500H1V9M9 5l3.500-3.500M5 9l-4 3.500" /></Ico></IconBtn>
      </StatusBar>
      <Taskbar><TaskItem /></Taskbar>

      <Panel aria-label="筛选">
        <PanelTop>
          <TopBtn><SortIcon s={16} />升序</TopBtn>
          <TopBtn><SortIcon s={16} flip />降序</TopBtn>
          <TopBtn><Ico s={16} c="#777"><path d="M3 2h4v4H3z" fill="#ea6b64" stroke="none" /><path d="M3 9h4v4H3z" fill="#7b86ea" stroke="none" /><path d="M10.500 2v13L9 13" /></Ico>颜色排序</TopBtn>
          <Switch><input type="checkbox" />关</Switch>
        </PanelTop>
        <PanelBody>
          <Row>
            <PTab $on>内容筛选</PTab>
            <PTab>颜色筛选</PTab>
            <DateBtn><Ico w={14} h={16} c="#555d6b"><path d="M7 1.500H1l4 5v8l3-2V7.500M9 7V3q0-2 2-2t2 2v4M9 5h4" /></Ico>日期筛选</DateBtn>
          </Row>
          <SearchBox>
            <input aria-label="搜索筛选项" placeholder="(支持多条件过滤，例如：北京  上海)" />
            <Tri d="M0 0h7L3.500 7z" w={7} h={7} />
            <SearchIcon s={16} />
          </SearchBox>
          <List>
            <ListHead>
              <HeadBtn $on>名称<Ico w={8} h={12} c="#5b9a32" sw={1.600}><path d="M4 12V2M1 5l3-3.500L7 5" /></Ico></HeadBtn>
              <VLine $h={18} $l={21} $r={17} />
              <HeadBtn>计数<Ico w={8} h={12} sw={1.600}><path d="M4 0v10M1 7l3 3.500L7 7" /></Ico></HeadBtn>
              <Spacer />
              <HeadBtn><Ico w={17} h={12} c="#444"><path d="M1 1.500h14M1 6h14M1 10.500h14" /></Ico>选项</HeadBtn>
            </ListHead>
            <Tree>
              <TreeRow $in={25}>
                <Tick type="checkbox" defaultChecked aria-label="全选" />
                <span>(<a href="#all">全选</a>|<a href="#invert">反选</a>)<Count>{' ( 24 )'}</Count></span>
              </TreeRow>
              <TreeRow $in={5}>
                <Twist aria-label="收起 2023年"><Ico w={10} h={7} sw={1.600}><path d="M1 1l4 4 4-4" /></Ico></Twist>
                <Tick id="y" type="checkbox" defaultChecked />
                <label htmlFor="y">2023年</label><Count>{' ( 24 )'}</Count>
              </TreeRow>
              <TreeRow $in={25}>
                <Twist aria-label="展开 10月"><Ico w={7} h={10} c="#999" sw={1.500}><path d="M1 1l4 4-4 4" /></Ico></Twist>
                <Tick id="m10" type="checkbox" defaultChecked />
                <label htmlFor="m10">10月</label><Count>{' ( 19 )'}</Count>
              </TreeRow>
              <TreeRow $in={25}>
                <Twist aria-label="展开 11月"><Ico w={7} h={10} c="#999" sw={1.500}><path d="M1 1l4 4-4 4" /></Ico></Twist>
                <Tick id="m11" type="checkbox" defaultChecked />
                <label htmlFor="m11">11月</label><Count>{' ( 5 )'}</Count>
              </TreeRow>
            </Tree>
            <Months>
              <MonthBtn>上月</MonthBtn><MonthBtn>本月</MonthBtn><MonthBtn>下月</MonthBtn><MonthBtn $more>更多</MonthBtn>
            </Months>
          </List>
          <Shown>(全部显示)</Shown>
          <PanelFoot>
            <HeadBtn><svg width="17" height="16" viewBox="0 0 17 16"><path d="M7 2v7h7a6.500 6.500 0 1 1-7-7z" fill="#ef7d62" /><path d="M8.500 1v6.500H15A6.500 6.500 0 0 0 8.500 1z" fill="#7a7a7a" /></svg>分析</HeadBtn>
            <Spacer />
            <Btn>确定</Btn><Btn>取消</Btn>
          </PanelFoot>
        </PanelBody>
      </Panel>

      <Menu>
        <MenuItem>等于(E)</MenuItem>
        <MenuSep />
        <MenuItem>之前(B)</MenuItem>
        <MenuItem>之后(A)</MenuItem>
        <MenuItem>介于(W)</MenuItem>
        <MenuSep />
        <MenuItem>自定义筛选(F)</MenuItem>
      </Menu>

      <Mark $x={177} $y={332} width="13" height="20" viewBox="0 0 13 20"><path d="M1 1v15l3.500-3 2.500 6 2.500-1-2.500-6H12z" fill="#fff" stroke="#222" /></Mark>
      <Arrow $x={149} $y={210} width="90" height="30" viewBox="0 0 90 30"><path d="M4 3.500 62 15 61 11 87 22 58 24.500 61 19.500 4 6.500z" /></Arrow>
      <Arrow $x={187} $y={334} width="34" height="110" viewBox="0 0 34 110"><path d="M4 104 17 28 16 27 27 3 30 29 22 28 7 104z" /></Arrow>
      <Arrow $x={269} $y={624} width="22" height="78" viewBox="0 0 22 78"><path d="M18 4 9 50 4 47 5 74 17 49 12.500 50 20 4z" /></Arrow>

      <Watermark>
        <svg width="46" height="44" viewBox="0 0 46 44">
          <path d="M44 1Q14 2 5 20q-5 13 6 16Q6 26 18 17 26 11 44 1z" fill="#3f8fd6" />
          <path d="M22 15q14-4 19 4 3 12-18 20-8 3-18 2 22-5 25-15 0-9-8-11z" fill="#49b96a" />
          <path d="M26 13Q14 18 12 28q-1 8 9 8-9-6 5-23z" fill="#2f76c4" />
        </svg>
        <WmText>极光下载站<span>www.xz7.com</span></WmText>
      </Watermark>
    </Window>
  );
}
